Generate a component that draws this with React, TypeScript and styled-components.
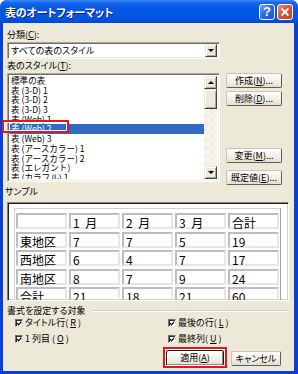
import React from "react";
import styled, { createGlobalStyle, css } from "styled-components";

const FONT = `"Noto Sans CJK JP", "Noto Sans CJK SC", "Noto Sans", sans-serif`;

const Global = createGlobalStyle`
  html, body { margin: 0; padding: 0; background: #ffffff; }
  body { font-family: ${FONT}; }
  * { box-sizing: border-box; }
`;

const raised = css`
  background: #ece9d8;
  border: 1px solid;
  border-color: #ece9d8 #404040 #404040 #ece9d8;
  box-shadow: inset 1px 1px #ffffff, inset -1px -1px #aca899;
`;

const sunken = css`
  border: 1px solid;
  border-color: #aca899 #ffffff #ffffff #aca899;
  box-shadow: inset 1px 1px #716f64, inset -1px -1px #f1efe2;
`;

const Window = styled.div`
  width: 298px;
  height: 374px;
  display: flex;
  flex-direction: column;
  background: #0b3ed6;
  border-radius: 7px 7px 0 0;
  overflow: hidden;
  font-family: ${FONT};
  font-feature-settings: "palt";
`;

const TitleBar = styled.div`
  height: 23px;
  flex: none;
  display: flex;
  align-items: center;
  gap: 2px;
  padding: 0 5px 0 5px;
  background: linear-gradient(
    #3d8cf6 0%,
    #1565ec 12%,
    #0458e4 40%,
    #0356e2 80%,
    #0547d0 100%
  );
`;

const Title = styled.div`
  flex: 1;
  color: #ffffff;
  font-weight: 700;
  font-size: 11px;
  line-height: 14px;
  text-shadow: 1px 1px #0a1c84;
  letter-spacing: -0.2px;
`;

const CaptionButton = styled.div<{ $kind: "help" | "close" }>`
  width: 16px;
  height: 16px;
  border: 1px solid #ffffff;
  border-radius: 3px;
  display: flex;
  align-items: center;
  justify-content: center;
  color: #ffffff;
  font-family: "Liberation Sans", sans-serif;
  font-weight: 700;
  font-size: 13px;
  line-height: 14px;
  background: ${(p) =>
    p.$kind === "close"
      ? "linear-gradient(135deg, #f08f6e 0%, #e0552e 45%, #c4401a 100%)"
      : "linear-gradient(135deg, #6fa2fb 0%, #2d6cea 45%, #1a4fd1 100%)"};
`;

const Body = styled.div`
  flex: 1;
  margin: 0 4px 3px 3px;
  background: #ece9d8;
  display: flex;
  flex-direction: column;
  padding: 6px 5px 0 4px;
  color: #000000;
  font-size: 9px;
`;

const Label = styled.div<{ $mt?: number; $ml?: number }>`
  height: 12px;
  line-height: 12px;
  font-size: 9px;
  margin-top: ${(p) => p.$mt ?? 0}px;
  margin-left: ${(p) => p.$ml ?? 0}px;
  margin-bottom: 1px;
  white-space: nowrap;
`;

const Key = styled.u`
  text-decoration: underline;
  text-underline-offset: 1px;
`;

const Combo = styled.div`
  width: 213px;
  height: 17px;
  display: flex;
  align-items: center;
  background: #ffffff;
  padding: 2px;
  ${sunken};
`;

const ComboText = styled.div`
  flex: 1;
  padding-left: 1px;
  font-size: 9px;
  line-height: 12px;
`;

const DropButton = styled.div`
  width: 12px;
  height: 13px;
  display: flex;
  align-items: center;
  justify-content: center;
  ${raised};
`;

const Arrow = styled.span<{ $dir: "up" | "down" }>`
  width: 0;
  height: 0;
  border-left: 3px solid transparent;
  border-right: 3px solid transparent;
  ${(p) =>
    p.$dir === "down"
      ? "border-top: 3px solid #000;"
      : "border-bottom: 3px solid #000;"}
`;

const StyleRow = styled.div`
  position: relative;
  display: flex;
  align-items: flex-start;
  gap: 6px;
  height: 109px;
`;

const ListBox = styled.div`
  width: 213px;
  height: 109px;
  display: flex;
  background: #ffffff;
  padding: 2px;
  ${sunken};
`;

const ListItems = styled.div`
  flex: 1;
  display: flex;
  flex-direction: column;
  overflow: hidden;
`;

const ListItem = styled.div<{ $selected?: boolean }>`
  height: 9.7px;
  flex: none;
  line-height: 9.7px;
  font-size: 8.6px;
  font-feature-settings: normal;
  padding-left: 1px;
  white-space: nowrap;
  background: ${(p) => (p.$selected ? "#316ac5" : "transparent")};
  color: ${(p) => (p.$selected ? "#ffffff" : "#000000")};
`;

const ScrollBar = styled.div`
  width: 13px;
  display: flex;
  flex-direction: column;
  background-color: #f4f3ee;
  background-image: repeating-conic-gradient(#ffffff 0 25%, #ece9d8 0 50%);
  background-size: 2px 2px;
`;

const ScrollButton = styled.div`
  height: 13px;
  display: flex;
  align-items: center;
  justify-content: center;
  ${raised};
`;

const Thumb = styled.div`
  height: 20px;
  ${raised};
`;

const Track = styled.div`
  flex: 1;
`;

const SideButtons = styled.div`
  width: 56px;
  display: flex;
  flex-direction: column;
`;

const Button = styled.div<{ $w?: number; $mt?: number; $default?: boolean }>`
  width: ${(p) => p.$w ?? 56}px;
  height: ${(p) => (p.$default ? 16 : 15)}px;
  margin-top: ${(p) => p.$mt ?? 0}px;
  display: flex;
  align-items: center;
  justify-content: center;
  font-size: 9px;
  line-height: 12px;
  white-space: nowrap;
  border-radius: 2px;
  background: linear-gradient(#fdfdfb, #f1efe6 60%, #e2ded0);
  border: 1px solid;
  border-color: #c8c5b8 #5f5d55 #5f5d55 #c8c5b8;
  ${(p) =>
    p.$default &&
    css`
      border: 1px solid #1c1c1c;
      box-shadow: inset 1px 1px #ffffff, inset -1px -1px #8f8c80;
    `}
`;

const Annotation = styled.div`
  position: absolute;
  border: 2px solid #e8141a;
  box-shadow: inset 0 0 0 1px #ffffff;
  pointer-events: none;
`;

const ListMark = styled(Annotation)`
  top: 47px;
  left: -5px;
  width: 67px;
  height: 13px;
`;

const ButtonMark = styled(Annotation)`
  top: -3px;
  left: -3px;
  right: -3px;
  bottom: -2px;
`;

const SampleBox = styled.div`
  margin-top: 3px;
  height: 99px;
  background: #ffffff;
  padding: 5px 0 0 6px;
  overflow: hidden;
  border: 1px solid;
  border-color: #808080 #ffffff #ffffff #808080;
  box-shadow: inset 1px 1px #202020, inset -1px -1px #d4d0c8;
`;

const SampleTable = styled.div`
  width: 267px;
  display: grid;
  grid-template-columns: repeat(5, 51px);
  grid-auto-rows: 16px;
  column-gap: 2px;
  row-gap: 2.5px;
  padding: 4px 1px 1px 1px;
  border: 1px solid;
  border-color: #d0d0d0 #a0a0a0 #a0a0a0 #d0d0d0;
`;

const Cell = styled.div`
  border: 2px solid;
  border-color: #bdbdbd #e6e6e6 #e6e6e6 #bdbdbd;
  padding: 1px 0 0 2px;
  font-size: 12px;
  line-height: 13px;
  word-spacing: 3px;
  white-space: nowrap;
  overflow: visible;
  color: #000000;
  font-feature-settings: normal;
`;

const GroupHeader = styled.div`
  margin-top: 3px;
  display: flex;
  align-items: center;
  gap: 7px;
  height: 12px;
`;

const GroupLine = styled.div`
  flex: 1;
  border-top: 1px solid #d0d0bf;
  border-bottom: 1px solid #ffffff;
  margin-top: 2px;
`;

const Checks = styled.div`
  margin: 2px 0 0 8px;
  display: grid;
  grid-template-columns: 153px 1fr;
  grid-auto-rows: 10px;
  row-gap: 6px;
`;

const CheckRow = styled.div`
  display: flex;
  align-items: center;
  gap: 2px;
  font-size: 9px;
  line-height: 10px;
  white-space: nowrap;
`;

const CheckBox = styled.span`
  width: 8px;
  height: 8px;
  flex: none;
  display: flex;
  align-items: center;
  justify-content: center;
  background: #ffffff;
  border: 1px solid #1c1c1c;
  border-color: #6f6f6f #e0e0e0 #e0e0e0 #6f6f6f;
  box-shadow: inset 1px 1px #303030;
`;

const BottomRow = styled.div`
  margin-top: 6px;
  padding-right: 8px;
  display: flex;
  justify-content: flex-end;
  align-items: flex-start;
  gap: 7px;
`;

const ButtonWrap = styled.div`
  position: relative;
`;

const Check = () => (
  <CheckBox>
    <svg width="7" height="7" viewBox="0 0 7 7">
      <path d="M1 3 L3 5 L6.2 1.2" fill="none" stroke="#000" strokeWidth="1.4" />
    </svg>
  </CheckBox>
);

const items = [
  "標準の表",
  "表 (3-D) 1",
  "表 (3-D) 2",
  "表 (3-D) 3",
  "表 (Web) 1",
  "表 (Web) 2",
  "表 (Web) 3",
  "表 (アースカラー) 1",
  "表 (アースカラー) 2",
  "表 (エレガント)",
  "表 (カラフル) 1",
];

const table = [
  ["", "1 月", "2 月", "3 月", "合計"],
  ["東地区", "7", "7", "5", "19"],
  ["西地区", "6", "4", "7", "17"],
  ["南地区", "8", "7", "9", "24"],
  ["合計", "21", "18", "21", "60"],
];

export default function App() {
  return (
    <>
      <Global />
      <Window>
        <TitleBar>
          <Title>表のオートフォーマット</Title>
          <CaptionButton $kind="help">?</CaptionButton>
          <CaptionButton $kind="close">
            <svg width="10" height="10" viewBox="0 0 10 10">
              <path d="M1.5 1.5 L8.5 8.5 M8.5 1.5 L1.5 8.5" stroke="#fff" strokeWidth="1.8" />
            </svg>
          </CaptionButton>
        </TitleBar>
        <Body>
          <Label>
            分類(<Key>C</Key>):
          </Label>
          <Combo>
            <ComboText>すべての表のスタイル</ComboText>
            <DropButton>
              <Arrow $dir="down" />
            </DropButton>
          </Combo>
          <Label $mt={1}>
            表のスタイル(<Key>T</Key>):
          </Label>
          <StyleRow>
            <ListBox>
              <ListItems>
                {items.map((it, i) => (
                  <ListItem key={it} $selected={i === 5}>
                    {it}
                  </ListItem>
                ))}
              </ListItems>
              <ScrollBar>
                <ScrollButton>
                  <Arrow $dir="up" />
                </ScrollButton>
                <Thumb />
                <Track />
                <ScrollButton>
                  <Arrow $dir="down" />
                </ScrollButton>
              </ScrollBar>
            </ListBox>
            <SideButtons>
              <Button>
                作成(<Key>N</Key>)...
              </Button>
              <Button $mt={3}>
                削除(<Key>D</Key>)...
              </Button>
              <Button $mt={42}>
                変更(<Key>M</Key>)...
              </Button>
              <Button $mt={7}>
                既定値(<Key>E</Key>)...
              </Button>
            </SideButtons>
            <ListMark />
          </StyleRow>
          <Label $mt={4} $ml={-2}>
            サンプル
          </Label>
          <SampleBox>
            <SampleTable>
              {table.flatMap((row, r) =>
                row.map((c, ci) => <Cell key={`${r}-${ci}`}>{c}</Cell>)
              )}
            </SampleTable>
          </SampleBox>
          <GroupHeader>
            <span>書式を設定する対象</span>
            <GroupLine />
          </GroupHeader>
          <Checks>
            <CheckRow>
              <Check />
              タイトル行(<Key>R</Key>)
            </CheckRow>
            <CheckRow>
              <Check />
              最後の行(<Key>L</Key>)
            </CheckRow>
            <CheckRow>
              <Check />1 列目 (<Key>O</Key>)
            </CheckRow>
            <CheckRow>
              <Check />
              最終列(<Key>U</Key>)
            </CheckRow>
          </Checks>
          <BottomRow>
            <ButtonWrap>
              <Button $w={58} $default>
                適用(<Key>A</Key>)
              </Button>
              <ButtonMark />
            </ButtonWrap>
            <Button $w={50} $mt={1}>
              キャンセル
            </Button>
          </BottomRow>
        </Body>
      </Window>
    </>
  );
}
